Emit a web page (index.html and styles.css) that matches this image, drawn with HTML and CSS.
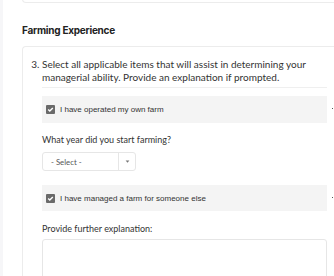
FILE: index.html
```html
<!DOCTYPE html>
<html>
<head>
<meta charset="utf-8">
<link rel="stylesheet" href="styles.css">
</head>
<body>
<div class="page">
  <div class="top-card"></div>
  <h2 class="section-title">Farming Experience</h2>
  <div class="card">
    <ol class="questions" start="3">
      <li>
        <p class="prompt">Select all applicable items that will assist in determining your managerial ability. Provide an explanation if prompted.</p>
        <div class="rule"></div>
        <div class="option">
          <span class="check"><svg viewBox="0 0 9 9" width="9" height="9"><path d="M2.2 4.6 L3.8 6.1 L6.8 3" fill="none" stroke="#fff" stroke-width="1.4"/></svg></span>
          <span class="option-label">I have operated my own farm</span>
          <span class="dot"></span>
        </div>
        <div class="field-label">What year did you start farming?</div>
        <div class="select">
          <span class="select-text">- Select -</span>
          <span class="select-btn"><svg viewBox="0 0 6 4" width="5" height="3"><path d="M0.5 0.5 L5.5 0.5 L3 3.5 Z" fill="#777"/></svg></span>
        </div>
        <div class="option option-2">
          <span class="check"><svg viewBox="0 0 9 9" width="9" height="9"><path d="M2.2 4.6 L3.8 6.1 L6.8 3" fill="none" stroke="#fff" stroke-width="1.4"/></svg></span>
          <span class="option-label">I have managed a farm for someone else</span>
          <span class="dot"></span>
        </div>
        <div class="field-label field-label-2">Provide further explanation:</div>
        <div class="textarea"></div>
      </li>
    </ol>
  </div>
</div>
</body>
</html>
```
FILE: styles.css
```css
html, body {
  margin: 0;
  padding: 0;
  background: #fff;
  overflow: hidden;
}
body {
  width: 334px;
  height: 276px;
  font-family: Lato, "Noto Sans", sans-serif;
  color: #333;
}
.page {
  border-left: 3px solid #f6f6f8;
  height: 276px;
  box-sizing: border-box;
  padding-left: 19px;
  overflow: hidden;
}
.top-card {
  height: 2px;
  margin-top: -10px;
  padding-top: 10px;
  border: 1px solid #ececec;
  border-top: none;
  border-radius: 0 0 4px 4px;
  width: 330px;
}
.section-title {
  margin: 0;
  padding-top: 20px;
  font-family: Inter, sans-serif;
  font-size: 10px;
  font-weight: 700;
  color: #222;
  line-height: 14px;
  letter-spacing: -0.25px;
}
.card {
  margin-top: 9px;
  border: 1px solid #ececec;
  border-right: none;
  border-radius: 4px 0 0 0;
  width: 330px;
  padding: 11px 0 0 0;
  box-sizing: border-box;
  height: 260px;
}
.questions {
  margin: 0;
  padding-left: 19px;
  font-size: 10px;
  color: #333;
}
.questions li {
  width: 285px;
}
.prompt {
  margin: 0;
  line-height: 13px;
}
.rule {
  height: 1px;
  background: #efefef;
  margin-top: 3px;
}
.option {
  position: relative;
  margin-top: 8px;
  height: 27px;
  background: #f4f4f4;
  display: flex;
  align-items: center;
  padding-left: 4px;
  gap: 5px;
}
.option-2 {
  margin-top: 14px;
  height: 26px;
}
.check {
  width: 9px;
  height: 9px;
  background: #6a6a6a;
  border-radius: 1px;
  display: flex;
}
.option-label {
  font-family: "Liberation Sans", Arial, sans-serif;
  font-size: 8px;
  color: #333;
}
.dot {
  position: absolute;
  right: -6px;
  top: 12px;
  width: 1px;
  height: 1px;
  background: #555;
}
.field-label {
  margin-top: 11px;
  font-size: 9px;
  color: #333;
  line-height: 12px;
}
.field-label-2 {
  margin-top: 12px;
}
.select {
  margin-top: 6px;
  width: 94px;
  height: 19px;
  border: 1px solid #e6e6e6;
  border-radius: 3px;
  box-sizing: border-box;
  display: flex;
  align-items: center;
}
.select-text {
  flex: 1;
  padding-left: 8px;
  font-size: 7.8px;
  color: #555;
}
.select-btn {
  width: 16px;
  height: 100%;
  border-left: 1px solid #e6e6e6;
  display: flex;
  align-items: center;
  justify-content: center;
}
.textarea {
  margin-top: 4px;
  height: 50px;
  border: 1px solid #e6e6e6;
  border-radius: 3px;
}
```
